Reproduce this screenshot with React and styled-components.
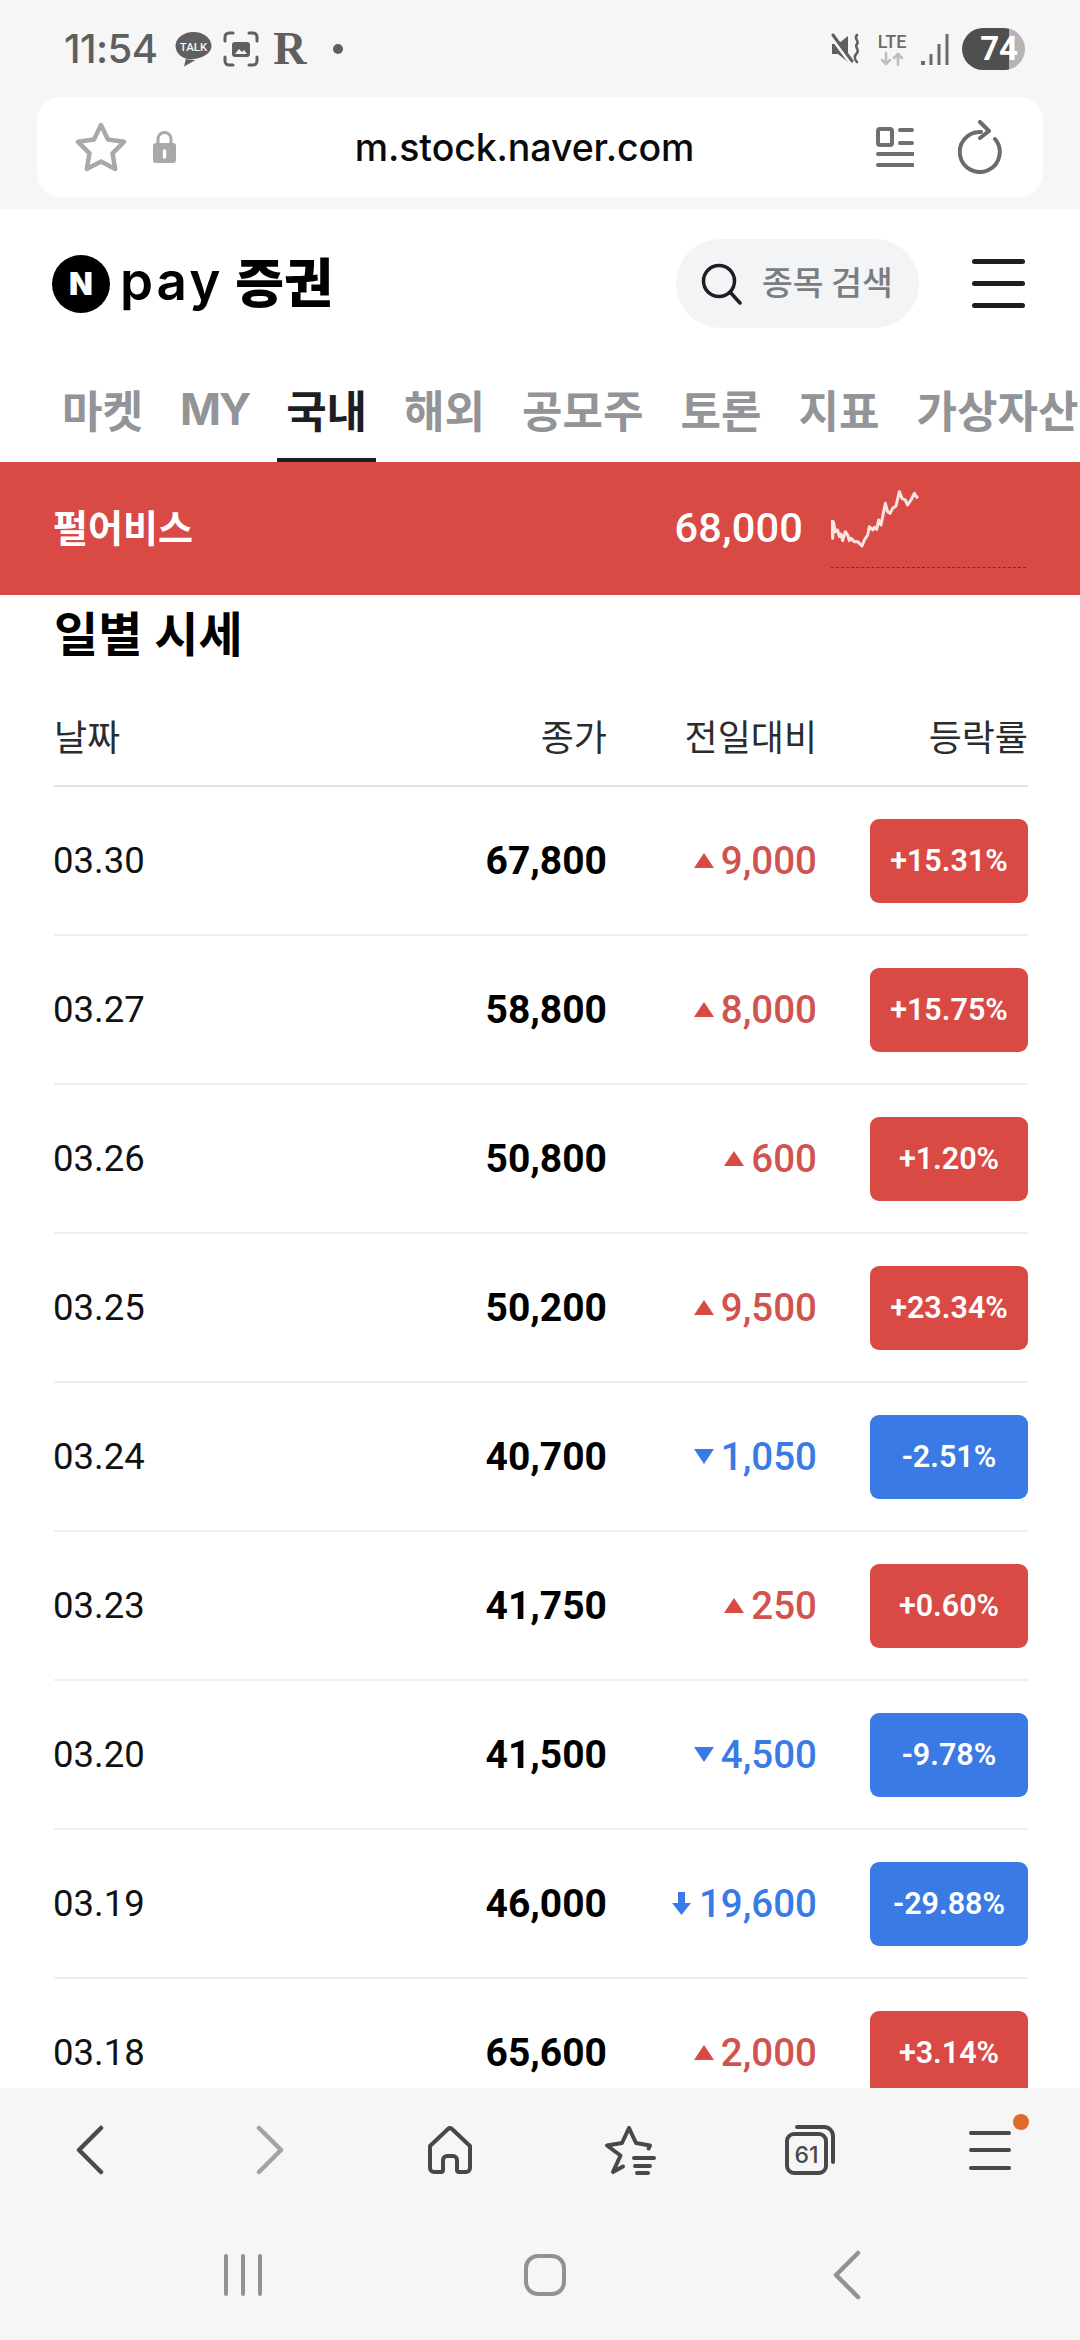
import React from "react";
import styled, { createGlobalStyle } from "styled-components";

const Global = createGlobalStyle`
  html, body { margin: 0; padding: 0; background: #fff; }
  * { box-sizing: border-box; }
`;
const KR = `Roboto, "Noto Sans CJK KR", sans-serif`;
const RED = "#d94a44";
const BLUE = "#3a7ae4";

const Page = styled.div`
  width: 1080px; height: 2340px; display: flex; flex-direction: column; overflow: hidden;
  background: #fff; font-family: ${KR};
`;
const Chrome = styled.div`background: #f6f6f6; height: 209px; padding-bottom: 12px; display: flex; flex-direction: column;`;
const StatusBar = styled.div`
  height: 97px; display: flex; align-items: center; justify-content: space-between; padding: 0 55px 0 64px;
  color: #5d5d5d;
`;
const StatusGroup = styled.div`display: flex; align-items: center;`;
const Time = styled.span`font: 500 40px Inter, Roboto, sans-serif; letter-spacing: -0.6px; margin-right: 18px; color: #5f5f5f;`;
const RMark = styled.span`font: 700 46px "Liberation Serif", serif; line-height: 1; color: #5f5f5f; margin: 0 26px 0 14px;`;
const Dot = styled.i`width: 10px; height: 10px; border-radius: 50%; background: #5f5f5f; display: block;`;
const Battery = styled.div`
  width: 63px; height: 42px; border-radius: 21px; margin-left: 12px;
  background: linear-gradient(90deg, #4f4f4f 0 74%, #b4b4b4 74% 100%);
  color: #fff; font: 700 33px Roboto, sans-serif; display: flex; align-items: center; justify-content: flex-end; padding-right: 7px;
`;
const UrlBar = styled.div`
  margin: 0 37px; height: 100px; border-radius: 24px; background: #fff;
  display: flex; align-items: center; padding: 0 39px 0 38px;
`;
const UrlGroup = styled.div`display: flex; align-items: center; gap: ${p => p.$gap}px;`;
const UrlText = styled.div`flex: 1; text-align: center; font: 500 37.500px Inter, sans-serif; color: #0a0a0a; letter-spacing: -0.1px; padding-right: 4px;`;

const Header = styled.header`height: 141px; padding: 30px 55px 22px 52px; display: flex; align-items: center;`;
const Logo = styled.div`display: flex; align-items: center; flex: 1;`;
const LogoN = styled.span`
  width: 58px; height: 58px; border-radius: 50%; background: #000; color: #fff; display: flex; align-items: center; justify-content: center;
  font: 900 31px Inter, sans-serif;
`;
const LogoPay = styled.span`font: 600 53px Inter, sans-serif; color: #000; margin: -6px 12px 0 10px; letter-spacing: 3px;`;
const LogoKr = styled.span`font: 900 53px "Noto Sans CJK KR", sans-serif; color: #000; margin-top: -8px;`;
const SearchPill = styled.div`
  width: 243px; height: 89px; border-radius: 45px; background: #f3f4f6; display: flex; align-items: center; gap: 19px; padding-left: 25px;
  font: 500 33.500px "Noto Sans CJK KR", sans-serif; color: #7a7d82; margin-right: 53px;
`;
const SearchLabel = styled.span`margin-top: -6px;`;
const Burger = styled.div`
  width: 53px; display: flex; flex-direction: column; gap: 17px;
  i { display: block; height: 5px; border-radius: 3px; background: #1d1e22; }
`;
const Tabs = styled.nav`height: 112px; padding: 0 0 0 53px; display: flex; gap: 19px; overflow: hidden;`;
const Tab = styled.div`
  padding: 10px 9px 0; white-space: nowrap; display: flex; align-items: center;
  border-bottom: 4px solid ${p => (p.$active ? "#1d1e22" : "transparent")};
  font: 700 44px Inter, "Noto Sans CJK KR", sans-serif;
  letter-spacing: ${p => (p.$latin ? "-2px" : "0")};
  color: ${p => (p.$active ? "#1d1e22" : "#929497")};
`;
const Band = styled.section`
  height: 133px; background: ${RED}; color: #fff; display: flex; align-items: center; padding: 0 54px 0 53px;
`;
const BandName = styled.div`flex: 1; font: 700 38px ${KR}; padding-bottom: 6px;`;
const BandPrice = styled.div`font: 500 41.500px Roboto, sans-serif; letter-spacing: 0.2px; margin-right: 28px; padding-bottom: 2px;`;
const Chart = styled.div`
  width: 195px; height: 98px; align-self: flex-start; margin-top: 8px;
  border-bottom: 1px dashed #77302c; display: flex;
`;
const Title = styled.h2`margin: 0; height: 78px; padding: 0 0 7px 54px; display: flex; align-items: center; font: 700 48px ${KR}; color: #000;`;
const Table = styled.div`flex: 1; min-height: 0; overflow: hidden; padding: 0 52px 0 54px;`;
const grid = `display: grid; grid-template-columns: 1fr 130px 210px 211px; align-items: center;`;
const HeadRow = styled.div`
  ${grid} height: 114px; padding: 14px 0 2px; border-bottom: 2px solid #e2e2e4; font: 400 36px ${KR}; color: #2a2c30;
`;
const HeadCell = styled.div`text-align: ${p => (p.$left ? "left" : "right")};`;
const Row = styled.div`${grid} height: 149px; border-bottom: 2px solid #eeeeef;`;
const DateCell = styled.div`font: 400 36.500px Roboto, sans-serif; color: #111; margin-left: -1px;`;
const Close = styled.div`font: 700 39px Roboto, sans-serif; color: #000; text-align: right;`;
const Change = styled.div`
  font: 500 38.500px Roboto, sans-serif; color: ${p => (p.$up ? "#cf5450" : BLUE)};
  display: flex; align-items: center; justify-content: flex-end; gap: 7px;
`;
const Badge = styled.div`
  justify-self: end; width: 158px; height: 84px; border-radius: 9px; background: ${p => (p.$up ? RED : BLUE)}; color: #fff;
  display: flex; align-items: center; justify-content: center; font: 600 30.500px Roboto, sans-serif;
`;
const BottomBar = styled.footer`height: 252px; background: #f6f6f6;`;
const NavRow = styled.div`height: 124px; display: grid; grid-template-columns: repeat(6, 180px);`;
const NavItem = styled.div`display: flex; align-items: center; justify-content: center; position: relative;`;
const NavDot = styled.i`position: absolute; width: 16px; height: 16px; border-radius: 50%; background: #e06a2a; right: 51px; top: 26px;`;
const SysRow = styled.div`height: 126px; display: grid; grid-template-columns: repeat(3, 302px); padding-left: 92px;`;

const Ico = ({ w, h, vb, children, ...r }) => (
  <svg width={w} height={h} viewBox={vb || `0 0 ${w} ${h}`} fill="none" strokeLinecap="round" strokeLinejoin="round" {...r}>{children}</svg>
);

const TalkIcon = () => (
  <Ico w={37} h={36} style={{ marginRight: 11 }}>
    <path d="M18.5 1C8.5 1 .5 7.3.5 15s8 14 18 14c1 0 1.700-.1 2.500-.2L9 35.500 11 27.500C17 30 36.500 26 36.500 15 36.500 7.300 28.500 1 18.500 1z" fill="#5f5f5f" />
    <text x="18.500" y="19.500" fontSize="11.500" fontFamily="Roboto" fontWeight="500" textAnchor="middle" fill="#f6f6f6">TALK</text>
  </Ico>
);
const FrameIcon = () => (
  <Ico w={36} h={36} stroke="#5f5f5f" strokeWidth="3">
    <path d="M2 10V6a4 4 0 0 1 4-4h4M26 2h4a4 4 0 0 1 4 4v4M2 26v4a4 4 0 0 0 4 4h4M26 34h4a4 4 0 0 0 4-4v-4" />
    <rect x="9" y="11" width="18" height="15" rx="3" fill="#5f5f5f" stroke="none" />
    <path d="M12 23l4-5 3 3 2-2 3 4z" fill="#f6f6f6" stroke="none" />
  </Ico>
);
const MuteIcon = () => (
  <Ico w={31} h={32} style={{ marginRight: 14, marginLeft: 3 }}>
    <path d="M1 11h6L17 3v26L7 21H1z" fill="#5f5f5f" />
    <path d="M0 4l20 27" stroke="#f6f6f6" strokeWidth="3" />
    <path d="M2 2l19 26" stroke="#5f5f5f" strokeWidth="3" />
    <path d="M26 2c-4 4 3 6 0 9s3 6 0 9-3 6 0 9" stroke="#5f5f5f" strokeWidth="2.500" />
  </Ico>
);
const LteIcon = () => (
  <Ico w={32} h={34} style={{ marginRight: 13 }}>
    <text x="16" y="16" fontSize="18" fontFamily="Roboto" fontWeight="500" textAnchor="middle" fill="#6a6a6a">LTE</text>
    <path d="M10 21v11M6 28l4 4 4-4" stroke="#bdbdbd" strokeWidth="2.500" />
    <path d="M22 33V22M18 26l4-4 4 4" stroke="#bdbdbd" strokeWidth="2.500" />
  </Ico>
);
const SignalIcon = () => (
  <Ico w={29} h={32} stroke="#6a6a6a" strokeWidth="3" strokeLinecap="butt">
    <path d="M2 32v-4" strokeWidth="4" /><path d="M10 32V21M18 32V11M26 32V1" />
  </Ico>
);
const StarIcon = () => (
  <Ico w={52} h={50} stroke="#a9a9a9" strokeWidth="4.500">
    <path d="M26 3l7 14.500 16 2.300-11.500 11.500 2.700 15.700L26 39.500 11.800 47l2.700-15.700L3 19.800l16-2.300z" />
  </Ico>
);
const LockIcon = () => (
  <Ico w={25} h={34}>
    <path d="M6 15V9a6.500 6.500 0 0 1 13 0v6" stroke="#a9a9a9" strokeWidth="3" />
    <rect x="1" y="13" width="23" height="20" rx="3" fill="#a9a9a9" />
    <path d="M12.500 21v6" stroke="#fff" strokeWidth="3.500" />
  </Ico>
);
const ReaderIcon = () => (
  <Ico w={38} h={40} stroke="#6f6f6f" strokeWidth="4">
    <rect x="2" y="2" width="14" height="16" rx="2" />
    <path d="M24 3h12M24 16h12M2 27h35M2 38h35" strokeWidth="4" />
  </Ico>
);
const ReloadIcon = () => (
  <Ico w={46} h={54} stroke="#6b6b6b" strokeWidth="4">
    <path d="M37 19A20 20 0 1 1 23 12" />
    <path d="M22 2l9 9-9 7" />
  </Ico>
);
const SearchIcon = () => (
  <Ico w={42} h={42} stroke="#1d1e22" strokeWidth="3.500">
    <circle cx="18" cy="18" r="15.500" /><path d="M29 29l10 11" />
  </Ico>
);
const Arrow = ({ kind, color }) => {
  if (kind === "limit") return <Ico w={21} h={25}><path d="M7 1h7v11h6L10.500 24 1 12h6z" fill={color} /></Ico>;
  if (kind === "up") return <Ico w={20} h={15}><path d="M10 0l10 15H0z" fill={color} /></Ico>;
  return <Ico w={20} h={15}><path d="M10 15L20 0H0z" fill={color} /></Ico>;
};
const Spark = () => (
  <svg width="195" height="97" viewBox="95 0 585 291">
    <polyline
      points="98,150 100,205 102,155 108,185 115,180 120,200 125,192 130,212 138,185 145,195 150,212 155,205 165,215 175,215 188,228 195,210 205,195 210,170 220,180 225,172 232,178 238,150 245,165 250,140 258,100 265,125 272,130 280,115 290,108 300,65 308,85 318,90 325,105 335,90 345,70 355,85"
      fill="none" stroke="#f8e4e2" strokeWidth="9" strokeLinejoin="round"
    />
  </svg>
);
const BackIcon = ({ c = "#4a4a4a" }) => <Ico w={28} h={50} stroke={c} strokeWidth="4.500"><path d="M25 3L3 25l22 22" /></Ico>;
const ForwardIcon = () => <Ico w={28} h={50} stroke="#a3a3a3" strokeWidth="4.500"><path d="M3 3l22 22L3 47" /></Ico>;
const HomeIcon = () => (
  <Ico w={46} h={48} stroke="#484848" strokeWidth="4">
    <path d="M3 20L21 3a3 3 0 0 1 4 0l18 17v22a4 4 0 0 1-4 4h-7a2 2 0 0 1-2-2V34a4 4 0 0 0-4-4h-6a4 4 0 0 0-4 4v10a2 2 0 0 1-2 2H7a4 4 0 0 1-4-4z" />
  </Ico>
);
const FavIcon = () => (
  <Ico w={52} h={50} stroke="#484848" strokeWidth="4">
    <path d="M25 3l7 15 14 2.500-1.500 3M16.500 30.500L9 47l10-5.500M25 3l-7 15L3 20.500l13.500 10" />
    <path d="M30 33h20M31 41h15M33 48h11" />
  </Ico>
);
const TabsIcon = () => (
  <Ico w={50} h={50} stroke="#484848" strokeWidth="4">
    <rect x="2" y="9" width="39" height="39" rx="7" />
    <path d="M12 2h27a9 9 0 0 1 9 9v26" />
    <text x="21.500" y="38" fontSize="23" fontFamily="Inter, Roboto" fontWeight="500" textAnchor="middle" fill="#484848" stroke="none">61</text>
  </Ico>
);
const MenuIcon = () => (
  <Ico w={42} h={42} stroke="#484848" strokeWidth="4">
    <path d="M2 4h38M2 21h38M2 39h38" />
  </Ico>
);
const RecentsIcon = () => <Ico w={40} h={42} stroke="#929292" strokeWidth="4"><path d="M3 2v38M20 2v38M37 2v38" /></Ico>;
const HomeSysIcon = () => <Ico w={42} h={42} stroke="#929292" strokeWidth="4"><rect x="2" y="2" width="38" height="38" rx="12" /></Ico>;

const tabs = ["마켓", "MY", "국내", "해외", "공모주", "토론", "지표", "가상자산"];
const rows = [
  ["03.30", "67,800", "9,000", "+15.31%", "up"],
  ["03.27", "58,800", "8,000", "+15.75%", "up"],
  ["03.26", "50,800", "600", "+1.20%", "up"],
  ["03.25", "50,200", "9,500", "+23.34%", "up"],
  ["03.24", "40,700", "1,050", "-2.51%", "down"],
  ["03.23", "41,750", "250", "+0.60%", "up"],
  ["03.20", "41,500", "4,500", "-9.78%", "down"],
  ["03.19", "46,000", "19,600", "-29.88%", "limit"],
  ["03.18", "65,600", "2,000", "+3.14%", "up"],
];

export default function App() {
  return (
    <Page>
      <Global />
      <Chrome>
        <StatusBar>
          <StatusGroup>
            <Time>11:54</Time>
            <TalkIcon />
            <FrameIcon />
            <RMark>R</RMark>
            <Dot />
          </StatusGroup>
          <StatusGroup>
            <MuteIcon />
            <LteIcon />
            <SignalIcon />
            <Battery>74</Battery>
          </StatusGroup>
        </StatusBar>
        <UrlBar>
          <UrlGroup $gap={25}><StarIcon /><LockIcon /></UrlGroup>
          <UrlText>m.stock.naver.com</UrlText>
          <UrlGroup $gap={44}><ReaderIcon /><ReloadIcon /></UrlGroup>
        </UrlBar>
      </Chrome>
      <Header>
        <Logo>
          <LogoN>N</LogoN>
          <LogoPay>pay</LogoPay>
          <LogoKr>증권</LogoKr>
        </Logo>
        <SearchPill><SearchIcon /><SearchLabel>종목 검색</SearchLabel></SearchPill>
        <Burger><i /><i /><i /></Burger>
      </Header>
      <Tabs>
        {tabs.map(t => <Tab key={t} $active={t === "국내"} $latin={t === "MY"}>{t}</Tab>)}
      </Tabs>
      <Band>
        <BandName>펄어비스</BandName>
        <BandPrice>68,000</BandPrice>
        <Chart><Spark /></Chart>
      </Band>
      <Title>일별 시세</Title>
      <Table>
        <HeadRow>
          <HeadCell $left>날짜</HeadCell>
          <HeadCell>종가</HeadCell>
          <HeadCell>전일대비</HeadCell>
          <HeadCell>등락률</HeadCell>
        </HeadRow>
        {rows.map(([d, c, ch, r, k]) => {
          const up = k === "up";
          return (
            <Row key={d}>
              <DateCell>{d}</DateCell>
              <Close>{c}</Close>
              <Change $up={up}><Arrow kind={k} color={up ? RED : BLUE} />{ch}</Change>
              <Badge $up={up}>{r}</Badge>
            </Row>
          );
        })}
      </Table>
      <BottomBar>
        <NavRow>
          <NavItem><BackIcon /></NavItem>
          <NavItem><ForwardIcon /></NavItem>
          <NavItem><HomeIcon /></NavItem>
          <NavItem><FavIcon /></NavItem>
          <NavItem><TabsIcon /></NavItem>
          <NavItem><MenuIcon /><NavDot /></NavItem>
        </NavRow>
        <SysRow>
          <NavItem><RecentsIcon /></NavItem>
          <NavItem><HomeSysIcon /></NavItem>
          <NavItem><BackIcon c="#929292" /></NavItem>
        </SysRow>
      </BottomBar>
    </Page>
  );
}
